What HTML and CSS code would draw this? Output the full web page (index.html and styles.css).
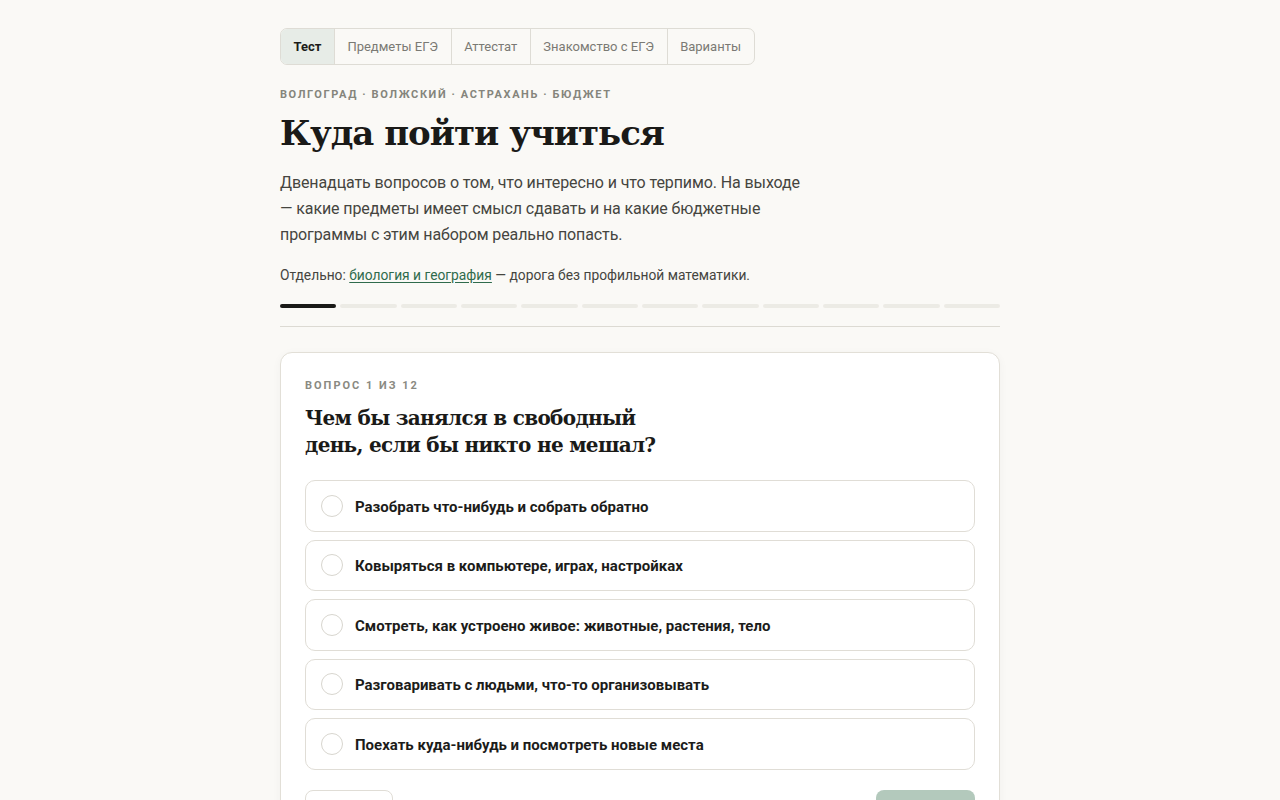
FILE: index.html
```
<!DOCTYPE html>
<html lang="ru">
<head>
<meta charset="utf-8">
<title>Куда пойти учиться</title>
<link rel="stylesheet" href="styles.css">
</head>
<body>
<main class="page">
  <nav class="tabs">
    <a class="tab active">Тест</a>
    <a class="tab">Предметы ЕГЭ</a>
    <a class="tab">Аттестат</a>
    <a class="tab">Знакомство с ЕГЭ</a>
    <a class="tab">Варианты</a>
  </nav>
  <div class="eyebrow">Волгоград · Волжский · Астрахань · бюджет</div>
  <h1 class="title">Куда пойти учиться</h1>
  <p class="lead">Двенадцать вопросов о том, что интересно и что терпимо. На выходе — какие предметы имеет смысл сдавать и на какие бюджетные программы с этим набором реально попасть.</p>
  <p class="note">Отдельно: <a class="link">биология и география</a> — дорога без профильной математики.</p>
  <div class="progress">
    <span class="seg done"></span><span class="seg"></span><span class="seg"></span><span class="seg"></span><span class="seg"></span><span class="seg"></span><span class="seg"></span><span class="seg"></span><span class="seg"></span><span class="seg"></span><span class="seg"></span><span class="seg"></span>
  </div>
  <hr class="rule">
  <section class="card">
    <div class="qnum">Вопрос 1 из 12</div>
    <h2 class="question">Чем бы занялся в свободный день, если бы никто не мешал?</h2>
    <div class="options">
      <label class="option"><span class="radio"></span><span class="otext">Разобрать что-нибудь и собрать обратно</span></label>
      <label class="option"><span class="radio"></span><span class="otext">Ковыряться в компьютере, играх, настройках</span></label>
      <label class="option"><span class="radio"></span><span class="otext">Смотреть, как устроено живое: животные, растения, тело</span></label>
      <label class="option"><span class="radio"></span><span class="otext">Разговаривать с людьми, что-то организовывать</span></label>
      <label class="option"><span class="radio"></span><span class="otext">Поехать куда-нибудь и посмотреть новые места</span></label>
    </div>
    <div class="actions">
      <button class="btn back">Назад</button>
      <button class="btn next" disabled>Дальше</button>
    </div>
  </section>
</main>
</body>
</html>
```
FILE: styles.css
```
* { box-sizing: border-box; }
html, body { margin: 0; padding: 0; }
body {
  background: #faf9f6;
  color: #1c1c1a;
  font-family: "Roboto", "Noto Sans", sans-serif;
}
.page {
  width: 720px;
  margin: 0 auto;
  padding-top: 28px;
}
.tabs {
  display: inline-flex;
  border: 1px solid #dedcd5;
  border-radius: 7px;
  overflow: hidden;
  background: #faf9f6;
}
.tab {
  padding: 0 12.5px;
  height: 35px;
  line-height: 35px;
  font-size: 13px;
  color: #7a7a74;
  border-left: 1px solid #dedcd5;
  cursor: pointer;
}
.tab:first-child { border-left: none; }
.tab.active {
  background: #e7ece7;
  color: #1c1c1a;
  font-weight: 700;
}
.eyebrow {
  margin-top: 23px;
  font-size: 11px;
  font-weight: 700;
  letter-spacing: 1.6px;
  text-transform: uppercase;
  color: #85857c;
  line-height: 14px;
}
.title {
  margin: 8px 0 0;
  font-family: "DejaVu Serif", "Liberation Serif", serif;
  font-weight: 700;
  font-size: 34px;
  line-height: 46px;
  letter-spacing: -1px;
  color: #1a1a18;
}
.lead {
  margin: 14px 0 0;
  max-width: 525px;
  font-size: 16px;
  line-height: 26px;
  letter-spacing: -0.1px;
  color: #45453f;
}
.note {
  margin: 17px 0 0;
  font-size: 13.8px;
  line-height: 20px;
  color: #45453f;
}
.link {
  color: #2f6b4c;
  text-decoration: underline;
  text-underline-offset: 2px;
}
.progress {
  display: flex;
  gap: 4px;
  margin-top: 19px;
}
.seg {
  flex: 1;
  height: 4px;
  border-radius: 2px;
  background: #ecebe5;
}
.seg.done { background: #1a1a18; }
.rule {
  margin: 18px 0 0;
  border: 0;
  border-top: 1px solid #dcdad3;
  height: 0;
}
.card {
  margin-top: 25px;
  background: #fff;
  border: 1px solid #e2dfd7;
  border-radius: 12px;
  box-shadow: 0 2px 10px rgba(0,0,0,0.04);
  padding: 26px 24px 24px;
}
.qnum {
  font-size: 11px;
  font-weight: 700;
  letter-spacing: 2px;
  text-transform: uppercase;
  color: #8a8a82;
  line-height: 14px;
}
.question {
  margin: 12px 0 0;
  max-width: 365px;
  font-family: "DejaVu Serif", "Liberation Serif", serif;
  font-weight: 700;
  font-size: 20px;
  line-height: 27px;
  letter-spacing: -0.7px;
  color: #1a1a18;
}
.options {
  display: flex;
  flex-direction: column;
  gap: 8px;
  margin-top: 21px;
}
.option {
  display: flex;
  align-items: center;
  gap: 12px;
  height: 51.5px;
  padding: 0 15px;
  border: 1px solid #e0ddd6;
  border-radius: 10px;
  background: #fff;
  cursor: pointer;
}
.radio {
  width: 22px;
  height: 22px;
  border: 1px solid #d8d6cf;
  border-radius: 50%;
  flex: none;
}
.otext {
  font-size: 15px;
  font-weight: 700;
  color: #1c1c1a;
  margin-top: 2px;
}
.actions {
  display: flex;
  justify-content: space-between;
  margin-top: 20px;
}
.btn {
  font-family: inherit;
  font-size: 15px;
  font-weight: 700;
  height: 42px;
  border-radius: 8px;
  padding: 0 20px;
}
.btn.back {
  background: #fff;
  border: 1px solid #e0ddd6;
  color: #45453f;
  width: 88px;
}
.btn.next {
  background: #b3c9bc;
  border: 0;
  color: #fff;
  width: 99px;
}
```
